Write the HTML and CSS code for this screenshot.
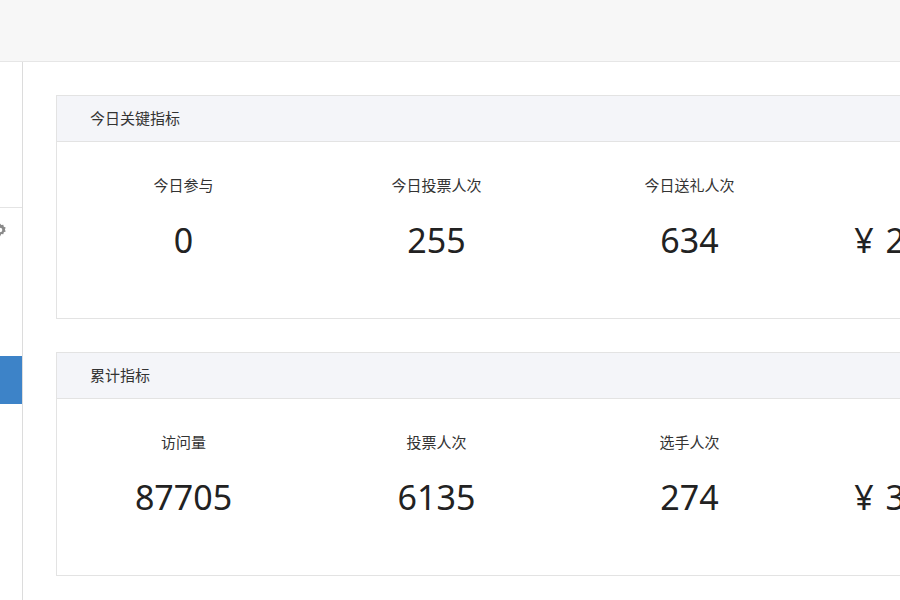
FILE: index.html
```html
<!DOCTYPE html>
<html lang="zh-CN">
<head>
	<meta charset="UTF-8">
	<title>数据概况</title>
	<link rel="stylesheet" href="styles.css">
</head>
<body>
	<div class="topbar"></div>
	<div class="wrap">
		<div class="side">
			<div class="side-top"></div>
			<div class="side-item">
				<svg class="gear" width="14" height="14" viewBox="0 0 14 14">
					<path d="M7 0.5l1.3 1.6 2-0.4 0.5 2 1.9 0.9-0.8 1.9 0.8 1.9-1.9 0.9-0.5 2-2-0.4L7 13.5l-1.3-1.6-2 0.4-0.5-2-1.9-0.9 0.8-1.9-0.8-1.9 1.9-0.9 0.5-2 2 0.4z" fill="#8a8a8a"/>
					<circle cx="7" cy="7" r="2.3" fill="#fff"/>
				</svg>
			</div>
			<div class="side-space"></div>
			<div class="side-item active"></div>
		</div>
		<div class="main">
			<div class="card">
				<div class="card-head">今日关键指标</div>
				<div class="card-body">
					<div class="stat"><div class="label">今日参与</div><div class="num">0</div></div>
					<div class="stat"><div class="label">今日投票人次</div><div class="num">255</div></div>
					<div class="stat"><div class="label">今日送礼人次</div><div class="num">634</div></div>
					<div class="stat"><div class="label">礼物收入</div><div class="num"><span class="yen">¥</span>21560.00</div></div>
				</div>
			</div>
			<div class="card">
				<div class="card-head">累计指标</div>
				<div class="card-body">
					<div class="stat"><div class="label">访问量</div><div class="num">87705</div></div>
					<div class="stat"><div class="label">投票人次</div><div class="num">6135</div></div>
					<div class="stat"><div class="label">选手人次</div><div class="num">274</div></div>
					<div class="stat"><div class="label">总收入</div><div class="num"><span class="yen">¥</span>36820.00</div></div>
				</div>
			</div>
		</div>
	</div>
</body>
</html>
```

FILE: styles.css
```css
body{
	margin: 0;
	width: 900px;
	height: 600px;
	overflow: hidden;
	background-color: #fff;
	font-family: "Noto Sans", "Noto Sans CJK SC", sans-serif;
	color: #333;
}
.topbar{
	height: 61px;
	background-color: #f7f7f7;
	border-bottom: 1px solid #e6e6e6;
}
.wrap{
	display: flex;
	height: 538px;
}
.side{
	width: 22px;
	flex-shrink: 0;
	border-right: 1px solid #dcdcdc;
	overflow: hidden;
}
.side-top{
	height: 145px;
	border-bottom: 1px solid #e4e4e4;
}
.side-item{
	height: 48px;
	display: flex;
	align-items: center;
}
.gear{
	margin-left: -7px;
	margin-top: -4px;
}
.side-space{
	height: 100px;
}
.side-item.active{
	background-color: #3d83c8;
}
.main{
	flex: 1;
	padding: 33px 0 0 33px;
	overflow: hidden;
}
.card{
	width: 1016px;
	border: 1px solid #e3e3e3;
	margin-bottom: 33px;
}
.card-head{
	height: 45px;
	line-height: 45px;
	padding-left: 33px;
	background-color: #f4f5f9;
	border-bottom: 1px solid #e3e3e3;
	font-size: 15px;
	color: #333;
}
.card-body{
	display: flex;
	padding: 33px 0 57px;
}
.stat{
	width: 253px;
	text-align: center;
}
.label{
	font-size: 15px;
	line-height: 20px;
	color: #333;
}
.num{
	margin-top: 24px;
	font-size: 34px;
	line-height: 42px;
	color: #222;
}
.yen{
	margin-right: 12px;
}
```
